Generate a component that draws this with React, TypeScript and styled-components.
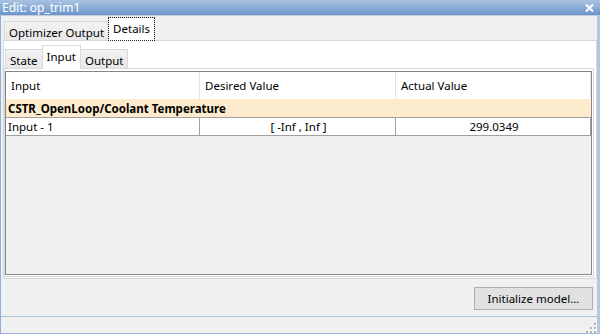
import styled, { createGlobalStyle } from "styled-components";

const Global = createGlobalStyle`
  html, body {
    margin: 0;
    padding: 0;
    background: #f0f0f0;
  }
  body {
    font-family: "Segoe UI", "Noto Sans", "DejaVu Sans", sans-serif;
    font-size: 11.5px;
    color: #000;
  }
`;

const Window = styled.div`
  width: 600px;
  height: 334px;
  display: flex;
  flex-direction: column;
  background: #f0f0f0;
  overflow: hidden;
`;

const TitleBar = styled.div`
  height: 15px;
  flex: none;
  display: flex;
  align-items: center;
  justify-content: space-between;
  padding: 0 6px 0 2px;
  background: linear-gradient(#a9c2e0, #8fb0d9 45%, #6a94cc);
  border-bottom: 1px solid #c3ccd8;
  color: #fff;
  font-size: 12px;
  line-height: 15px;
`;

const Frame = styled.div`
  flex: 1;
  min-height: 0;
  display: flex;
  flex-direction: column;
  border-left: 1px solid #8eb0da;
  border-right: 3px solid #b3c7e1;
  border-bottom: 1px solid #9bb7da;
`;

const TabStrip = styled.div<{ $height: number; $indent: number }>`
  height: ${(p) => p.$height}px;
  flex: none;
  display: flex;
  align-items: flex-end;
  padding-left: ${(p) => p.$indent}px;
  margin-bottom: -1px;
`;

const Tab = styled.div<{ $active?: boolean; $focus?: boolean }>`
  position: relative;
  z-index: ${(p) => (p.$active ? 2 : 1)};
  box-sizing: border-box;
  height: ${(p) => (p.$active ? 24 : 20)}px;
  padding: ${(p) => (p.$active ? "3px 4px 0" : "2px 4px 0")};
  margin-left: -1px;
  display: flex;
  align-items: ${(p) => (p.$active ? "flex-start" : "center")};
  border: 1px solid #d9d9d9;
  border-bottom: ${(p) => (p.$active ? "none" : "1px solid #d9d9d9")};
  background: ${(p) =>
    p.$active ? "#fff" : "linear-gradient(#f2f2f2, #e8e8e8)"};
  outline: ${(p) => (p.$focus ? "1px dotted #222" : "none")};
  outline-offset: -1px;
  white-space: nowrap;
`;

const OuterPanel = styled.div`
  flex: 1;
  min-height: 0;
  margin-left: 2px;
  display: flex;
  flex-direction: column;
  border: 1px solid #d9d9d9;
  background: #fff;
  padding: 0 2px 1px 0;
`;

const InnerPanel = styled.div`
  flex: 1;
  min-height: 0;
  display: flex;
  flex-direction: column;
  border: 1px solid #d9d9d9;
  background: #fff;
  padding: 2px 1px 1px 0;
`;

const TableFrame = styled.div`
  flex: 1;
  min-height: 0;
  display: flex;
  flex-direction: column;
  border: 1px solid #828790;
  background: #f0f0f0;
`;

const Row = styled.div<{ $kind: "head" | "group" | "data" }>`
  display: grid;
  grid-template-columns: 194px 196px 1fr;
  flex: none;
  height: ${(p) => (p.$kind === "head" ? 27 : p.$kind === "group" ? 18 : 17)}px;
  background: ${(p) => (p.$kind === "group" ? "#fdebcd" : "#fff")};
  border-bottom: ${(p) => (p.$kind === "head" ? "none" : "1px solid #a0a0a0")};
  font-weight: ${(p) => (p.$kind === "group" ? 700 : 400)};
`;

const Cell = styled.div<{ $kind: "head" | "data"; $center?: boolean }>`
  display: flex;
  align-items: center;
  justify-content: ${(p) => (p.$center ? "center" : "flex-start")};
  padding-left: ${(p) => (p.$kind === "head" ? 5 : 2)}px;
  border-right: 1px solid
    ${(p) => (p.$kind === "head" ? "#e5e5e5" : "#a0a0a0")};
  white-space: nowrap;
  overflow: hidden;
`;

const GroupLabel = styled.div`
  grid-column: 1 / -1;
  display: flex;
  align-items: center;
  padding-left: 2px;
`;

const Footer = styled.div`
  height: 37px;
  flex: none;
  display: flex;
  justify-content: flex-end;
  align-items: flex-start;
  padding: 8px 4px 0 0;
  box-sizing: border-box;
`;

const Button = styled.button`
  width: 119px;
  height: 23px;
  border: 1px solid #adadad;
  background: #e1e1e1;
  font: inherit;
  color: #000;
  padding: 0;
`;

const StatusBar = styled.div`
  height: 16px;
  flex: none;
  border-top: 1px solid #a9c3df;
  display: flex;
  justify-content: flex-end;
  align-items: flex-end;
`;

const CloseIcon = () => (
  <svg width="9" height="8" viewBox="0 0 9 8">
    <path d="M1 0.5 L8 7.5 M8 0.5 L1 7.5" stroke="#fff" strokeWidth="2" />
  </svg>
);

const Grip = () => (
  <svg width="12" height="11" viewBox="0 0 12 11">
    {[
      [9, 1],
      [5, 5],
      [9, 5],
      [1, 9],
      [5, 9],
      [9, 9],
    ].map(([x, y], i) => (
      <g key={i}>
        <rect x={x + 1} y={y + 1} width="2" height="2" fill="#fff" />
        <rect x={x} y={y} width="2" height="2" fill="#b4b4b4" />
      </g>
    ))}
  </svg>
);

export default function App() {
  return (
    <Window>
      <Global />
      <TitleBar>
        <span>Edit: op_trim1</span>
        <CloseIcon />
      </TitleBar>
      <Frame>
        <TabStrip $height={25} $indent={4}>
          <Tab>Optimizer Output</Tab>
          <Tab $active $focus>
            Details
          </Tab>
        </TabStrip>
        <OuterPanel>
          <TabStrip $height={28} $indent={2}>
            <Tab>State</Tab>
            <Tab $active>Input</Tab>
            <Tab>Output</Tab>
          </TabStrip>
          <InnerPanel>
            <TableFrame>
              <Row $kind="head">
                <Cell $kind="head">Input</Cell>
                <Cell $kind="head">Desired Value</Cell>
                <Cell $kind="head">Actual Value</Cell>
              </Row>
              <Row $kind="group">
                <GroupLabel>CSTR_OpenLoop/Coolant Temperature</GroupLabel>
              </Row>
              <Row $kind="data">
                <Cell $kind="data">Input - 1</Cell>
                <Cell $kind="data" $center>
                  [ -Inf , Inf ]
                </Cell>
                <Cell $kind="data" $center>
                  299.0349
                </Cell>
              </Row>
            </TableFrame>
          </InnerPanel>
        </OuterPanel>
        <Footer>
          <Button>Initialize model...</Button>
        </Footer>
        <StatusBar>
          <Grip />
        </StatusBar>
      </Frame>
    </Window>
  );
}
